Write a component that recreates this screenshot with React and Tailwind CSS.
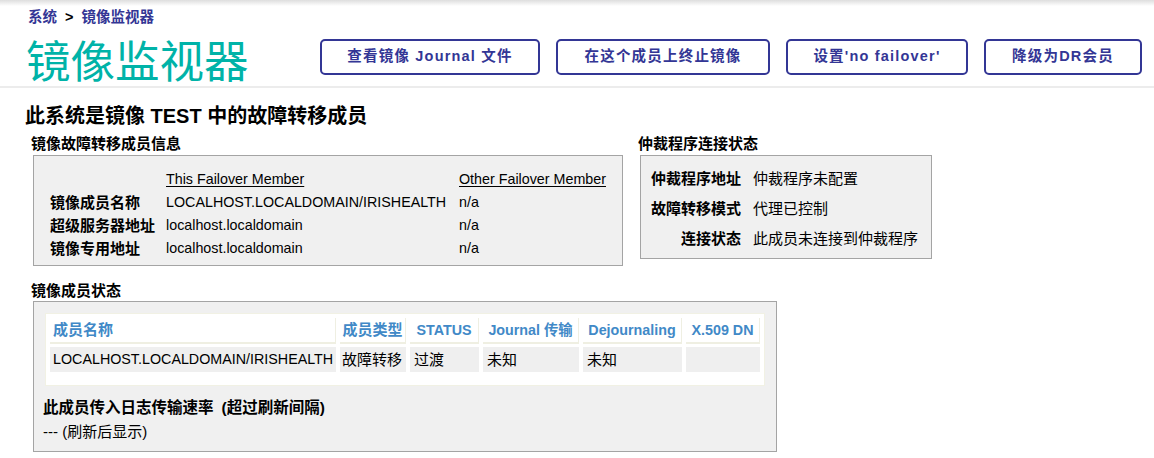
import React from "react";

const buttons = [
  { label: "查看镜像 Journal 文件", w: "w-[220px]" },
  { label: "在这个成员上终止镜像", w: "w-[214px]" },
  { label: "设置'no failover'", w: "w-[182px]" },
  { label: "降级为DR会员", w: "w-[158px]" },
];

const memberRows = [
  ["镜像成员名称", "LOCALHOST.LOCALDOMAIN/IRISHEALTH", "n/a"],
  ["超级服务器地址", "localhost.localdomain", "n/a"],
  ["镜像专用地址", "localhost.localdomain", "n/a"],
];

const arbiterRows = [
  ["仲裁程序地址", "仲裁程序未配置"],
  ["故障转移模式", "代理已控制"],
  ["连接状态", "此成员未连接到仲裁程序"],
];

const statusCols = ["成员名称", "成员类型", "STATUS", "Journal 传输", "Dejournaling", "X.509 DN"];
const statusRow = ["LOCALHOST.LOCALDOMAIN/IRISHEALTH", "故障转移", "过渡", "未知", "未知", ""];

export default function App() {
  return (
    <div className="min-h-[458px] bg-white text-black text-[14.3px] font-['Liberation_Sans','Noto_Sans_CJK_SC',sans-serif]">
      {/* header */}
      <div className="h-[6px] bg-gradient-to-b from-[#dedede] to-white" />
      <div className="border-b-2 border-[#ececec]">
        <div className="pl-[28px] h-[22px] flex items-center gap-[8px] font-bold text-[14.5px] leading-none">
          <span className="text-[#333695]">系统</span>
          <span className="text-black">&gt;</span>
          <span className="text-[#333695]">镜像监视器</span>
        </div>
        <div className="flex items-center justify-between pl-[26px] pr-[12px] h-[58px]">
          <h1 className="text-[44.5px] leading-none text-[#00b3a8] font-['Noto_Sans_CJK_SC',sans-serif] pt-[5px]">
            镜像监视器
          </h1>
          <div className="flex items-center gap-[16px]">
            {buttons.map((b) => (
              <button
                key={b.label}
                className={`${b.w} h-[36px] border-2 border-[#333695] rounded-[5px] bg-white text-[#333695] font-bold text-[14.5px] tracking-[1.2px]`}
              >
                {b.label}
              </button>
            ))}
          </div>
        </div>
      </div>

      {/* body */}
      <div className="pl-[25px] pt-[15px]">
        <h2 className="text-[20px] leading-[26px] font-bold">此系统是镜像 TEST 中的故障转移成员</h2>

        <div className="flex items-start gap-[15px] mt-[5px] pl-[6px]">
          <div className="w-[592px]">
            <div className="h-[20px] leading-[20px] font-bold text-[15px]">镜像故障转移成员信息</div>
            <div className="ml-[2px] mt-[1px] bg-[#f0f0f0] border border-[#a4a4a4] pt-[12px] pb-[5px] pl-[16px]">
              <div className="grid grid-cols-[116px_293px_1fr]">
                <div className="h-[23px]" />
                <div className="h-[23px] leading-[23px]">
                  <span className="underline underline-offset-2">This Failover Member</span>
                </div>
                <div className="h-[23px] leading-[23px]">
                  <span className="underline underline-offset-2">Other Failover Member</span>
                </div>
                {memberRows.map((r) => (
                  <React.Fragment key={r[0]}>
                    <div className="h-[23px] leading-[23px] font-bold text-[15px]">{r[0]}</div>
                    <div className="h-[23px] leading-[23px]">{r[1]}</div>
                    <div className="h-[23px] leading-[23px]">{r[2]}</div>
                  </React.Fragment>
                ))}
              </div>
            </div>
          </div>

          <div>
            <div className="h-[20px] leading-[20px] font-bold text-[15px]">仲裁程序连接状态</div>
            <div className="ml-[2px] mt-[1px] w-[292px] bg-[#f0f0f0] border border-[#a4a4a4] pt-[8px] pb-[4px]">
              {arbiterRows.map((r) => (
                <div key={r[0]} className="flex h-[30px] items-center gap-[12px] text-[15px]">
                  <div className="w-[100px] text-right font-bold">{r[0]}</div>
                  <div>{r[1]}</div>
                </div>
              ))}
            </div>
          </div>
        </div>

        <div className="pl-[6px] mt-[15px]">
          <div className="h-[20px] leading-[20px] font-bold text-[15px]">镜像成员状态</div>
          <div className="ml-[2px] w-[744px] bg-[#f0f0f0] border border-[#a4a4a4] pt-[11px] pb-[7px]">
            <div className="mx-[11px] bg-white border border-[#f1f1e4] p-[4px] pb-[13px]">
              <div className="grid grid-cols-[286px_66px_69px_96px_99px_74px] gap-x-[4px] gap-y-[3px]">
                {statusCols.map((c, i) => (
                  <div
                    key={c}
                    className={`h-[26px] leading-[24px] bg-white border-b-2 border-r border-[#efefe2] font-bold text-[#4189c7] whitespace-nowrap ${
                      i === 0 ? "pl-[3px] text-[15px]" : "text-center"
                    } ${i === 1 ? "text-[15px]" : ""}`}
                  >
                    {c}
                  </div>
                ))}
                {statusRow.map((c, i) => (
                  <div
                    key={i}
                    className={`h-[25px] leading-[25px] bg-[#efefef] whitespace-nowrap ${
                      i === 0 ? "pl-[3px]" : i === 1 ? "pl-[2px] text-[15px]" : "pl-[4px] text-[15px]"
                    }`}
                  >
                    {c}
                  </div>
                ))}
              </div>
            </div>
            <div className="pl-[9px] pt-[10px]">
              <div className="h-[24px] leading-[24px] font-bold text-[15.5px]">
                此成员传入日志传输速率<span className="ml-[8px]">(超过刷新间隔)</span>
              </div>
              <div className="h-[24px] leading-[24px] text-[15px]">--- (刷新后显示)</div>
            </div>
          </div>
        </div>
      </div>
    </div>
  );
}
